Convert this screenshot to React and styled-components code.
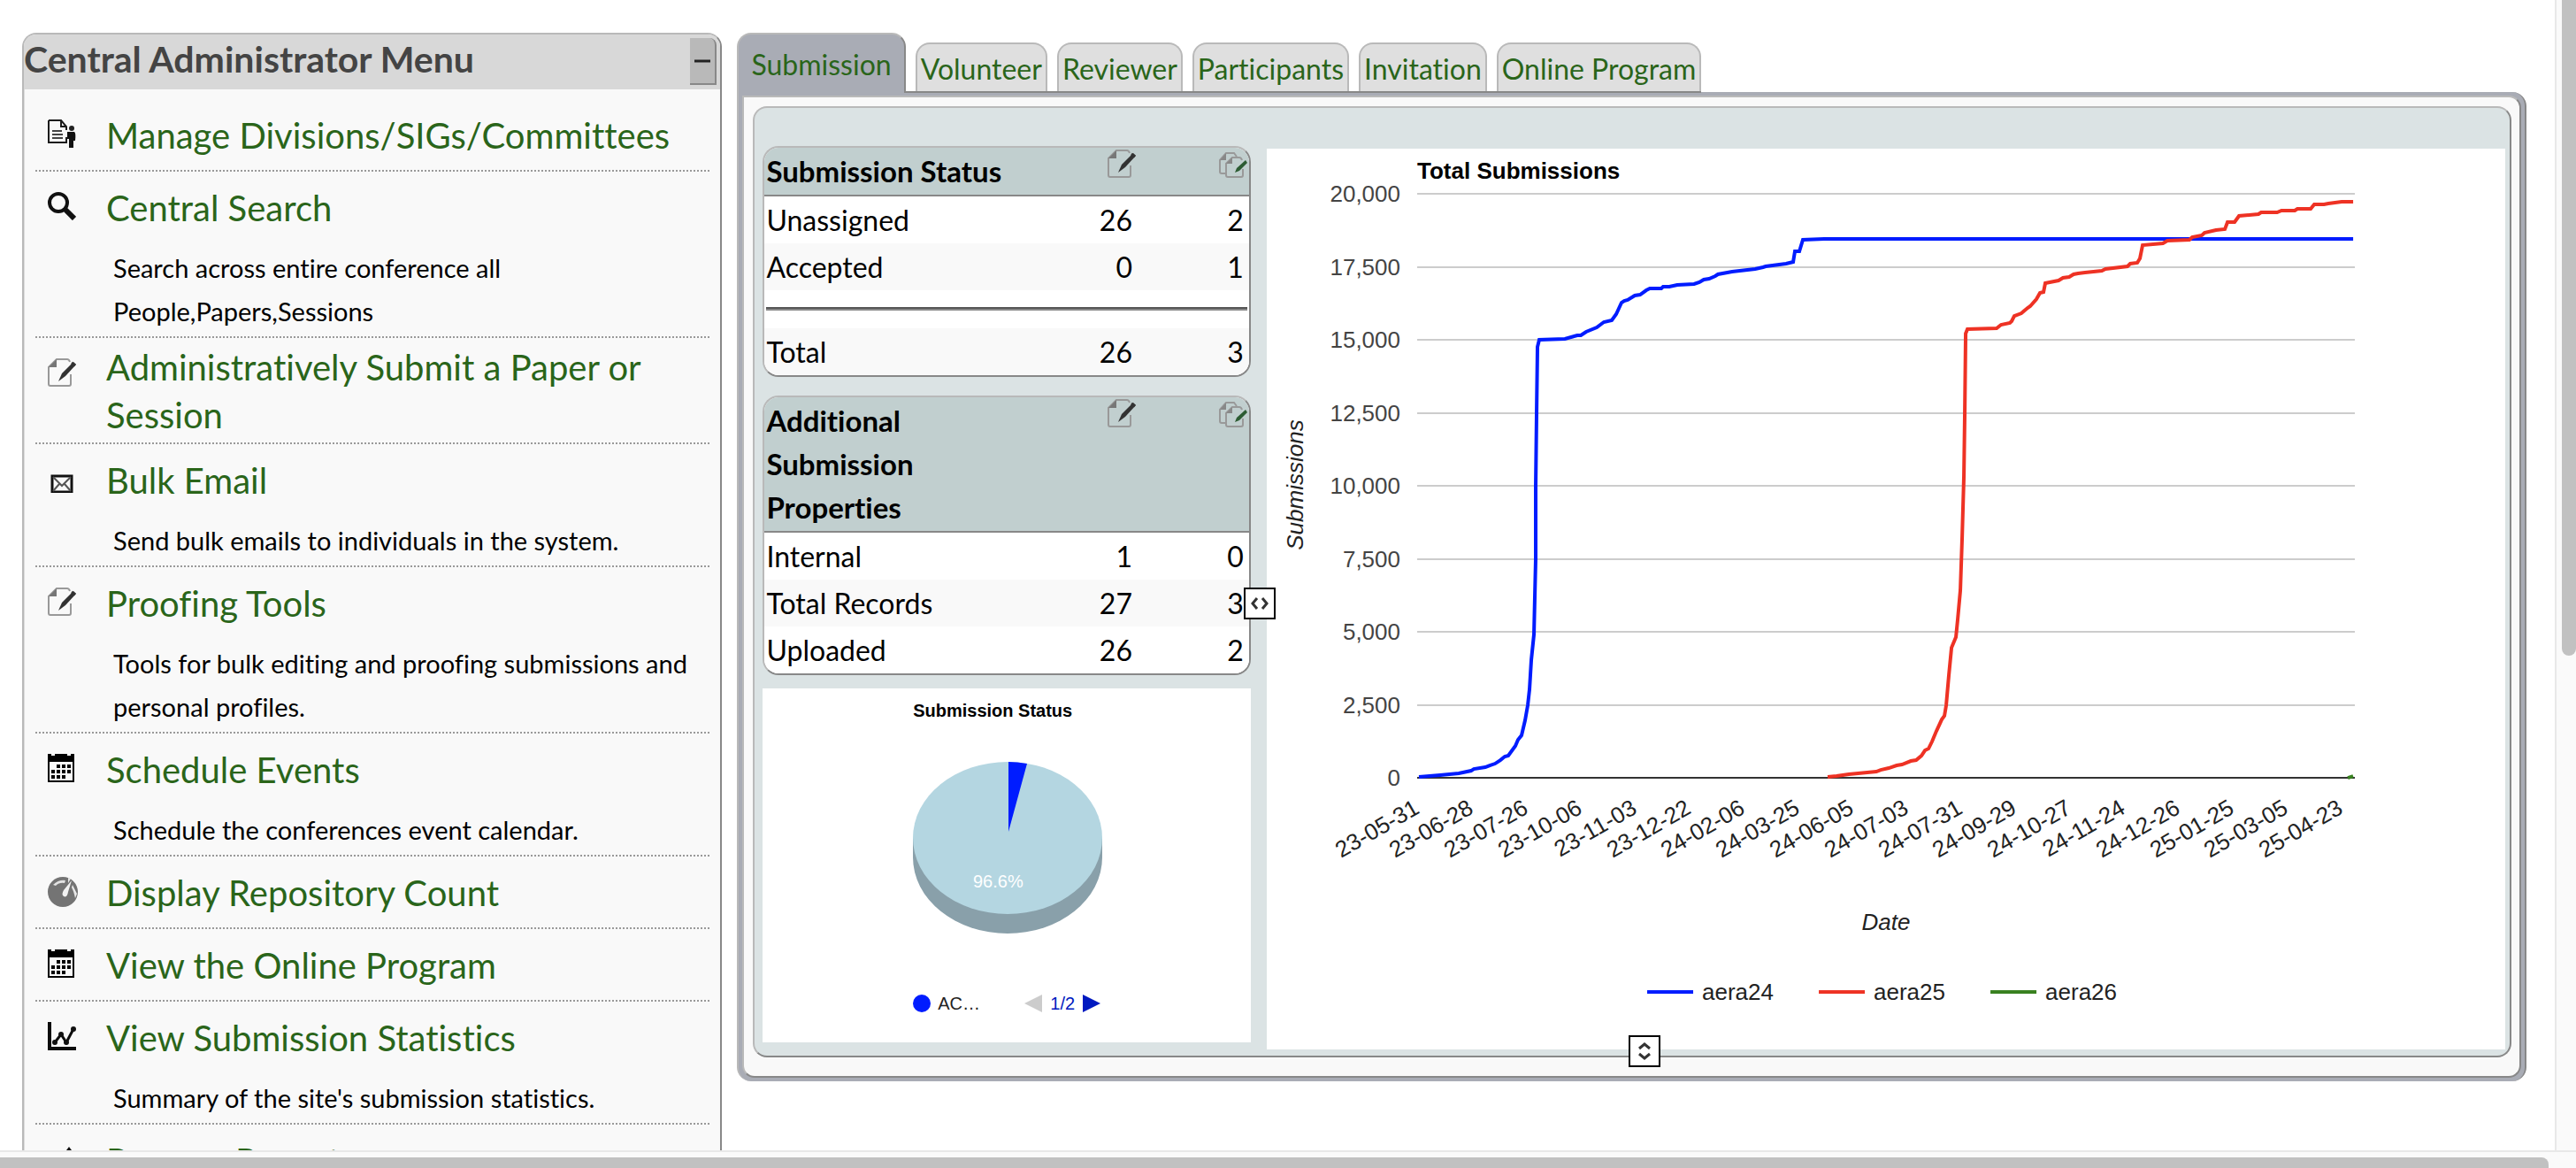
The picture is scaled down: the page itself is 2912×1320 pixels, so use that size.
import styled, { createGlobalStyle } from "styled-components";

const light = "#b9b9b9";
const dark = "#888888";
const green = "#2a651a";

const GlobalStyle = createGlobalStyle`
  * {
    box-sizing: border-box;
  }
  body {
    margin: 0;
    background: #ffffff;
    color: #000000;
    font-family: Lato, "Open Sans", sans-serif;
    font-variant-ligatures: none;
    overflow: hidden;
  }
  a {
    color: ${green};
    text-decoration: none;
  }
`;

const Viewport = styled.div`
  display: grid;
  grid-template-columns: 1fr 24px;
  grid-template-rows: 1fr 20px;
  height: 100vh;
`;

const Page = styled.div`
  display: grid;
  grid-template-columns: 9fr 23fr;
  align-items: start;
  gap: 17px;
  min-height: 0;
  padding: 37px 32px 0 25px;
  overflow: hidden;
`;

const VerticalBar = styled.div`
  border-left: 2px solid #e8e8e8;
  background: #fafafa;
  padding-left: 6px;
`;

const VerticalThumb = styled.div`
  height: 57%;
  border-radius: 0 0 8px 8px;
  background: #c1c1c1;
`;

const HorizontalBar = styled.div`
  grid-column: 1 / -1;
  border-top: 2px solid #e8e8e8;
  background: #fafafa;
  padding: 6px 31px 0 0;
`;

const HorizontalThumb = styled.div`
  height: 12px;
  border-radius: 0 8px 0 0;
  background: #c1c1c1;
`;

/* ---- side menu ---- */

const Sidebar = styled.aside`
  border: 2px solid ${light};
  border-right-color: ${dark};
  border-radius: 16px 16px 0 0;
  background: #f9f9f9;
  overflow: hidden;
`;

const SidebarHeader = styled.header`
  display: flex;
  justify-content: space-between;
  align-items: flex-start;
  height: 62px;
  padding: 4px 4px 0 0;
  background: #d8d8d8;
`;

const SidebarTitle = styled.h2`
  margin: 0;
  color: #444444;
  font-size: 41px;
  font-weight: 700;
  line-height: 48px;
`;

const CollapseButton = styled.button`
  display: flex;
  align-items: center;
  justify-content: center;
  width: 30px;
  height: 53px;
  padding: 0;
  border: 0 solid ${dark};
  border-width: 0 2px 2px 0;
  border-radius: 0 8px 0 0;
  background: ${light};
  color: #222222;
`;

const MenuList = styled.ul`
  margin: 0;
  padding: 11px 12px 0 12px;
  border-left: 1px solid #dedede;
  list-style: none;
`;

const MenuItem = styled.li`
  border-bottom: 2px dotted #999999;
`;

const MenuHead = styled.div`
  display: flex;
  align-items: flex-start;
  padding-left: 14px;
`;

const MenuIcon = styled.span`
  flex: none;
  display: flex;
  width: 66px;
  padding-top: 23px;
`;

const MenuLinkBox = styled.div`
  display: flex;
  align-items: center;
  min-height: 80px;
  padding: 6px 0 4px;
`;

const MenuLink = styled.a`
  font-size: 40px;
  line-height: 54px;
`;

const MenuText = styled.p`
  margin: 0;
  padding: 4px 12px 4px 88px;
  font-size: 29px;
  line-height: 49px;
`;

/* ---- tabs and panel ---- */

const TabStrip = styled.nav`
  position: relative;
  display: inline-flex;
  align-items: flex-end;
  gap: 11px;
  height: 68px;
  border-bottom: 2px solid ${dark};
  vertical-align: top;
`;

const Tab = styled.a`
  height: ${({ $active }) => ($active ? "68px" : "55px")};
  margin-bottom: ${({ $active }) => ($active ? "-2px" : "0")};
  padding: ${({ $active }) => ($active ? "10px 14px 0" : "4px 4px 0")};
  border: 2px solid ${light};
  border-bottom: 0;
  border-right-color: ${({ $active }) => ($active ? dark : light)};
  border-radius: 16px 16px 0 0;
  background: ${({ $active }) => ($active ? "#a9acb5" : "#dfdfdf")};
  font-size: 32px;
  line-height: 48px;
  white-space: nowrap;
`;

const Frame = styled.section`
  margin-top: -1px;
  padding: 4px;
  border-left: 2px solid ${light};
  border-right: 2px solid ${dark};
  border-radius: 0 16px 16px 16px;
  background: #a9acb5;
`;

const FrameBody = styled.div`
  position: relative;
  padding: 10px 9px 21px 10px;
  border: 2px solid;
  border-color: ${light} ${dark} ${dark} ${light};
  border-radius: 0 14px 14px 14px;
  background: #f9f9f9;
`;

const Board = styled.div`
  display: grid;
  grid-template-columns: 28% 18px 1fr;
  padding: 43px 5px 7px 9px;
  border: 2px solid;
  border-color: ${light} ${dark} ${dark} ${light};
  border-radius: 16px;
  background: #dbe3e4;
`;

const Summary = styled.div`
  display: flex;
  flex-direction: column;
`;

const Splitter = styled.div`
  position: relative;
`;

const Handle = styled.button`
  position: absolute;
  display: flex;
  align-items: center;
  justify-content: center;
  width: 36px;
  height: 36px;
  padding: 0;
  border: 2px solid #000000;
  background: #ffffff;
`;

const ColumnHandle = styled(Handle)`
  top: 50%;
  left: -8px;
  margin-top: -12px;
`;

const RowHandle = styled(Handle)`
  bottom: 10px;
  left: 50%;
  margin-left: -4px;
`;

/* ---- count tables ---- */

const TableCard = styled.div`
  margin-bottom: ${({ $gap }) => $gap}px;
  border: 2px solid;
  border-color: ${light} ${dark} ${dark} ${light};
  border-radius: 18px;
  background: #ffffff;
  overflow: hidden;
`;

const Table = styled.table`
  width: 100%;
  table-layout: fixed;
  border-collapse: separate;
  border-spacing: 0;
  font-size: 32px;
  line-height: 49px;

  th,
  td {
    padding: 2px;
    text-align: left;
    vertical-align: top;
  }
  thead th {
    border-bottom: 2px solid ${dark};
    background: #c1cfcf;
    font-size: 33px;
    font-weight: 700;
  }
  tbody th {
    font-weight: 400;
  }
`;

const Row = styled.tr`
  background: ${({ $shade }) => ($shade ? "#f9f9f9" : "#ffffff")};
`;

const LabelCol = styled.col`
  width: 54%;
`;

const IconHead = styled.th`
  && {
    text-align: right;
    line-height: 1;
  }
`;

const Num = styled.td`
  && {
    padding-right: 6px;
    text-align: right;
  }
`;

const Rule = styled.hr`
  height: 4px;
  margin: 17px 0 18px;
  border: 0;
  border-top: 2px solid #555555;
  background: #888888;
`;

/* ---- charts ---- */

const PieCard = styled.figure`
  display: flex;
  justify-content: center;
  margin: 0;
  padding: 13px 0 32px;
  background: #ffffff;
`;

const PieBody = styled.div`
  display: flex;
  flex-direction: column;
  width: 212px;
  font-family: "Liberation Sans", Arial, sans-serif;
  font-size: 20px;
  line-height: 24px;
`;

const PieTitle = styled.figcaption`
  font-weight: 700;
  white-space: nowrap;
`;

const PieSvg = styled.svg`
  display: block;
  margin: 46px 0 66px;
  overflow: visible;
`;

const PieLegend = styled.div`
  display: flex;
  align-items: center;
  justify-content: space-between;
  color: #222222;
`;

const LegendEntry = styled.span`
  display: flex;
  align-items: center;
  gap: 8px;
`;

const Dot = styled.span`
  width: 20px;
  height: 20px;
  border-radius: 50%;
  background: #001cff;
`;

const Pager = styled.span`
  display: flex;
  align-items: center;
  gap: 9px;
  color: #0019c0;
`;

const PageButton = styled.button`
  display: flex;
  padding: 0;
  border: 0;
  background: none;
  color: ${({ disabled }) => (disabled ? "#cccccc" : "#0019c0")};
`;

const ChartPanel = styled.div`
  align-self: start;
  margin-top: 3px;
  background: #ffffff;
`;

const ChartSvg = styled.svg`
  display: block;
  width: 100%;
  height: auto;
  font-family: "Liberation Sans", Arial, sans-serif;
  font-size: 26px;
`;

const TickText = styled.text`
  fill: #444444;
  text-anchor: end;
`;

const AxisText = styled.text`
  fill: #222222;
  text-anchor: ${({ $anchor }) => $anchor || "start"};
  font-style: ${({ $italic }) => ($italic ? "italic" : "normal")};
`;

const ChartTitle = styled.text`
  fill: #000000;
  font-weight: 700;
`;

const icons = {
  manage: (
    <svg width="32" height="32" viewBox="0 0 32 32" fill="none" stroke="#1c1c1c">
      <path d="M1 1H15L21 8V12M21 20V26H1V1" strokeWidth="2" />
      <path d="M15 1V8H21" strokeWidth="2" />
      <path d="M5 13H16M5 17H17M5 21H17" strokeWidth="2" stroke="#444" />
      <circle cx="27" cy="10" r="3" fill="#222" stroke="none" />
      <path d="M22 14H30Q32 15 31 24H29V32H24V22H22Z" fill="#111" stroke="none" />
    </svg>
  ),
  search: (
    <svg width="32" height="32" viewBox="0 0 32 32" fill="none" stroke="#111111">
      <circle cx="12" cy="12" r="10" strokeWidth="4" />
      <path d="M19 19L30 30" strokeWidth="6" />
    </svg>
  ),
  edit: (
    <svg width="32" height="32" viewBox="0 0 32 32" fill="none">
      <path d="M26 18V29Q26 31 24 31H3Q1 31 1 29V10L10 1H22Q24 1 25 4" stroke="#999999" strokeWidth="2" />
      <path d="M1 10L10 1V10Z" fill="#777777" />
      <path d="M29 4L32 7L20 20L12 26L16 17Z" fill="#333333" />
      <path d="M27 5L31 8" stroke="#333333" strokeWidth="3" />
    </svg>
  ),
  editMany: (
    <svg width="32" height="32" viewBox="0 0 32 32" fill="none">
      <path d="M8 27H3Q1 27 1 25V12L8 4H17L20 8" stroke="#999999" strokeWidth="2" />
      <path d="M1 12L8 4V12Z" fill="#888888" />
      <path d="M27 22V29Q27 31 25 31H10Q8 31 8 29V16L15 9H23Q25 9 26 12" stroke="#999999" strokeWidth="2" />
      <path d="M8 16L15 9V16Z" fill="#888888" />
      <path d="M30 12L32 15L23 24L18 26L20 21Z" fill="#2c5c33" />
    </svg>
  ),
  mail: (
    <svg width="32" height="32" viewBox="0 0 32 32" fill="none" stroke="#111111">
      <rect x="5" y="13" width="22" height="18" strokeWidth="3" />
      <path d="M6 14L16 24L26 14M6 30L13 22M26 30L19 22" strokeWidth="2" stroke="#555555" />
    </svg>
  ),
  calendar: (
    <svg width="32" height="32" viewBox="0 0 32 32" fill="#000000">
      <path d="M0 0H4V2H8V0H22V2H26V0H30V32H0ZM2 9V30H28V9Z" fillRule="evenodd" />
      <path d="M10 12h4v4h-4zM16 12h4v4h-4zM22 12h4v4h-4zM4 18h4v4h-4zM10 18h4v4h-4zM16 18h4v4h-4zM22 18h4v4h-4zM4 24h4v4h-4zM10 24h4v4h-4zM16 24h4v4h-4z" />
    </svg>
  ),
  gauge: (
    <svg width="34" height="34" viewBox="0 0 34 34">
      <circle cx="17" cy="17" r="17" fill="#747474" />
      <path d="M6 9Q12 3 20 4L19 7Q13 6 9 10Z" fill="#e2e2e2" />
      <path d="M27 4L23 17Q22 24 18 22Q15 20 18 15Z" fill="#f2f2f2" />
      <path d="M28 9L33 19L31 24Q29 15 27 12ZM23 1L26 2L23 7Z" fill="#e8e8e8" />
    </svg>
  ),
  stats: (
    <svg width="32" height="32" viewBox="0 0 32 32" fill="none" stroke="#0d0d0d">
      <path d="M2 0V30H32" strokeWidth="4" />
      <path d="M8 23L15 14L21 23L29 8" strokeWidth="3" />
      <g fill="#111111" stroke="none">
        <circle cx="8" cy="23" r="3" />
        <circle cx="15" cy="14" r="3" />
        <circle cx="21" cy="23" r="3" />
        <circle cx="29" cy="8" r="3" />
      </g>
    </svg>
  ),
  reports: (
    <svg width="32" height="32" viewBox="0 0 32 32" fill="#111111">
      <path d="M24 2L30 10H26V30H22V10H18Z" />
    </svg>
  ),
};

const menu = [
  { icon: "manage", title: "Manage Divisions/SIGs/Committees" },
  { icon: "search", title: "Central Search", text: "Search across entire conference all People,Papers,Sessions" },
  { icon: "edit", title: "Administratively Submit a Paper or Session" },
  { icon: "mail", title: "Bulk Email", text: "Send bulk emails to individuals in the system." },
  { icon: "edit", title: "Proofing Tools", text: "Tools for bulk editing and proofing submissions and personal profiles." },
  { icon: "calendar", title: "Schedule Events", text: "Schedule the conferences event calendar." },
  { icon: "gauge", title: "Display Repository Count" },
  { icon: "calendar", title: "View the Online Program" },
  { icon: "stats", title: "View Submission Statistics", text: "Summary of the site's submission statistics." },
  { icon: "reports", title: "Prepare Reports" },
];

const tabs = ["Submission", "Volunteer", "Reviewer", "Participants", "Invitation", "Online Program"];

const statusRows = [
  ["Unassigned", 26, 2],
  ["Accepted", 0, 1],
  null,
  ["Total", 26, 3],
];

const propertyRows = [
  ["Internal", 1, 0],
  ["Total Records", 27, 3],
  ["Uploaded", 26, 2],
];

const yTicks = ["20,000", "17,500", "15,000", "12,500", "10,000", "7,500", "5,000", "2,500", "0"];

const dates = [
  "23-05-31", "23-06-28", "23-07-26", "23-10-06", "23-11-03", "23-12-22",
  "24-02-06", "24-03-25", "24-06-05", "24-07-03", "24-07-31", "24-09-29",
  "24-10-27", "24-11-24", "24-12-26", "25-01-25", "25-03-05", "25-04-23",
];

const series = [
  {
    name: "aera24",
    color: "#001cff",
    points:
      "172,710 196,708 217,706 231,703 234,701 247,699 252,697 258,695 264,691 269,687 273,686 281,675 284,668 288,663 292,646 295,629 297,611 299,578 302,549 303,506 304,463 304,381 305,299 306,224 308,216 337,215 351,211 355,211 361,207 373,202 381,196 390,194 395,187 401,174 404,172 408,171 416,166 422,165 429,160 433,158 446,158 448,156 455,156 464,154 483,153 489,151 494,148 500,147 507,144 510,142 526,139 552,136 561,134 564,133 587,130 595,128 597,116 602,116 606,103 630,102 1228,102",
  },
  {
    name: "aera25",
    color: "#ee3224",
    points:
      "634,710 644,709 658,707 689,704 694,702 703,700 712,697 718,696 728,692 734,691 740,686 744,680 748,678 752,670 757,658 763,645 766,641 768,629 771,595 774,564 779,552 781,532 784,499 786,440 788,370 789,299 790,209 792,204 825,203 830,199 840,197 842,195 845,189 853,186 860,180 863,178 870,170 874,163 878,162 880,152 895,149 900,146 907,145 912,142 917,141 925,140 944,138 948,136 973,133 976,130 984,129 987,124 990,109 1013,107 1018,104 1043,103 1046,100 1057,98 1060,95 1073,92 1083,91 1086,83 1094,83 1099,76 1121,74 1124,72 1142,72 1147,70 1162,70 1165,68 1180,68 1184,63 1195,63 1200,62 1215,60 1228,60",
  },
  { name: "aera26", color: "#38811f", points: "1222,711 1228,709" },
];

function CountTable({ title, rows, gap }) {
  return (
    <TableCard $gap={gap}>
      <Table>
        <colgroup>
          <LabelCol />
          <col />
          <col />
        </colgroup>
        <thead>
          <tr>
            <th scope="col">{title}</th>
            <IconHead scope="col" aria-label="Papers">{icons.edit}</IconHead>
            <IconHead scope="col" aria-label="Sessions">{icons.editMany}</IconHead>
          </tr>
        </thead>
        <tbody>
          {rows.map((row, i) =>
            row ? (
              <Row key={row[0]} $shade={i % 2 === 1}>
                <th scope="row">{row[0]}</th>
                <Num>{row[1]}</Num>
                <Num>{row[2]}</Num>
              </Row>
            ) : (
              <Row key="rule">
                <td colSpan={3}>
                  <Rule />
                </td>
              </Row>
            )
          )}
        </tbody>
      </Table>
    </TableCard>
  );
}

function StatusPie() {
  return (
    <PieCard>
      <PieBody>
        <PieTitle>Submission Status</PieTitle>
        <PieSvg width="214" height="195" viewBox="0 0 214 195">
          <path d="M0 86V108A107 86 0 0 0 214 108V86Z" fill="#89a0aa" />
          <ellipse cx="107" cy="86" rx="107" ry="86" fill="#b4d6e1" />
          <path d="M108 0Q118 0 129 2L108 79Z" fill="#001cff" />
          <text x="68" y="142" fill="#ffffff">96.6%</text>
        </PieSvg>
        <PieLegend>
          <LegendEntry>
            <Dot />
            AC…
          </LegendEntry>
          <Pager>
            <PageButton disabled aria-label="Previous page">
              <svg width="20" height="20" fill="currentColor"><path d="M20 0V20L0 10Z" /></svg>
            </PageButton>
            1/2
            <PageButton aria-label="Next page">
              <svg width="20" height="20" fill="currentColor"><path d="M0 0V20L20 10Z" /></svg>
            </PageButton>
          </Pager>
        </PieLegend>
      </PieBody>
    </PieCard>
  );
}

function SubmissionsChart() {
  return (
    <ChartPanel>
      <ChartSvg viewBox="0 0 1400 1018" role="img" aria-label="Total Submissions">
        <ChartTitle x="170" y="34">Total Submissions</ChartTitle>
        {yTicks.map((tick, i) => {
          const y = Math.round(51 + i * 82.5);
          const last = i === yTicks.length - 1;
          return (
            <g key={tick}>
              <rect
                x="170"
                y={y - 1}
                width="1060"
                height="2"
                fill={last ? "#333333" : "#cccccc"}
                shapeRendering="crispEdges"
              />
              <TickText x="151" y={y + 9}>{tick}</TickText>
            </g>
          );
        })}
        {series.map(({ name, color, points }) => (
          <polyline key={name} points={points} fill="none" stroke={color} strokeWidth="4" />
        ))}
        {dates.map((date, i) => (
          <AxisText
            key={date}
            $anchor="end"
            transform={`translate(${Math.round(174 + i * 61.4)} 750) rotate(-30)`}
          >
            {date}
          </AxisText>
        ))}
        <AxisText $italic $anchor="middle" transform="translate(41 380) rotate(-90)">
          Submissions
        </AxisText>
        <AxisText $italic $anchor="middle" x="700" y="883">Date</AxisText>
        {series.map(({ name, color }, i) => (
          <g key={name} transform={`translate(${430 + i * 194} 0)`}>
            <rect y="951" width="52" height="4" fill={color} />
            <AxisText x="62" y="962">{name}</AxisText>
          </g>
        ))}
      </ChartSvg>
    </ChartPanel>
  );
}

export default function App() {
  return (
    <Viewport>
      <GlobalStyle />
      <Page>
        <Sidebar>
          <SidebarHeader>
            <SidebarTitle>Central Administrator Menu</SidebarTitle>
            <CollapseButton aria-label="Collapse menu">
              <svg width="18" height="4"><path d="M0 2H18" stroke="currentColor" strokeWidth="3" /></svg>
            </CollapseButton>
          </SidebarHeader>
          <MenuList>
            {menu.map(({ icon, title, text }) => (
              <MenuItem key={title}>
                <MenuHead>
                  <MenuIcon>{icons[icon]}</MenuIcon>
                  <MenuLinkBox>
                    <MenuLink href="#">{title}</MenuLink>
                  </MenuLinkBox>
                </MenuHead>
                {text && <MenuText>{text}</MenuText>}
              </MenuItem>
            ))}
          </MenuList>
        </Sidebar>
        <main>
          <TabStrip>
            {tabs.map((tab, i) => (
              <Tab key={tab} href="#" $active={i === 0}>{tab}</Tab>
            ))}
          </TabStrip>
          <Frame>
            <FrameBody>
              <Board>
                <Summary>
                  <CountTable title="Submission Status" rows={statusRows} gap={21} />
                  <CountTable title="Additional Submission Properties" rows={propertyRows} gap={15} />
                  <StatusPie />
                </Summary>
                <Splitter>
                  <ColumnHandle aria-label="Resize columns">
                    <svg width="22" height="14" viewBox="0 0 22 14" fill="none" stroke="#333333" strokeWidth="3">
                      <path d="M8 1L3 7L8 13M14 1L19 7L14 13" />
                    </svg>
                  </ColumnHandle>
                </Splitter>
                <SubmissionsChart />
              </Board>
              <RowHandle aria-label="Resize rows">
                <svg width="14" height="22" viewBox="0 0 14 22" fill="none" stroke="#333333" strokeWidth="3">
                  <path d="M1 8L7 3L13 8M1 14L7 19L13 14" />
                </svg>
              </RowHandle>
            </FrameBody>
          </Frame>
        </main>
      </Page>
      <VerticalBar>
        <VerticalThumb />
      </VerticalBar>
      <HorizontalBar>
        <HorizontalThumb />
      </HorizontalBar>
    </Viewport>
  );
}
